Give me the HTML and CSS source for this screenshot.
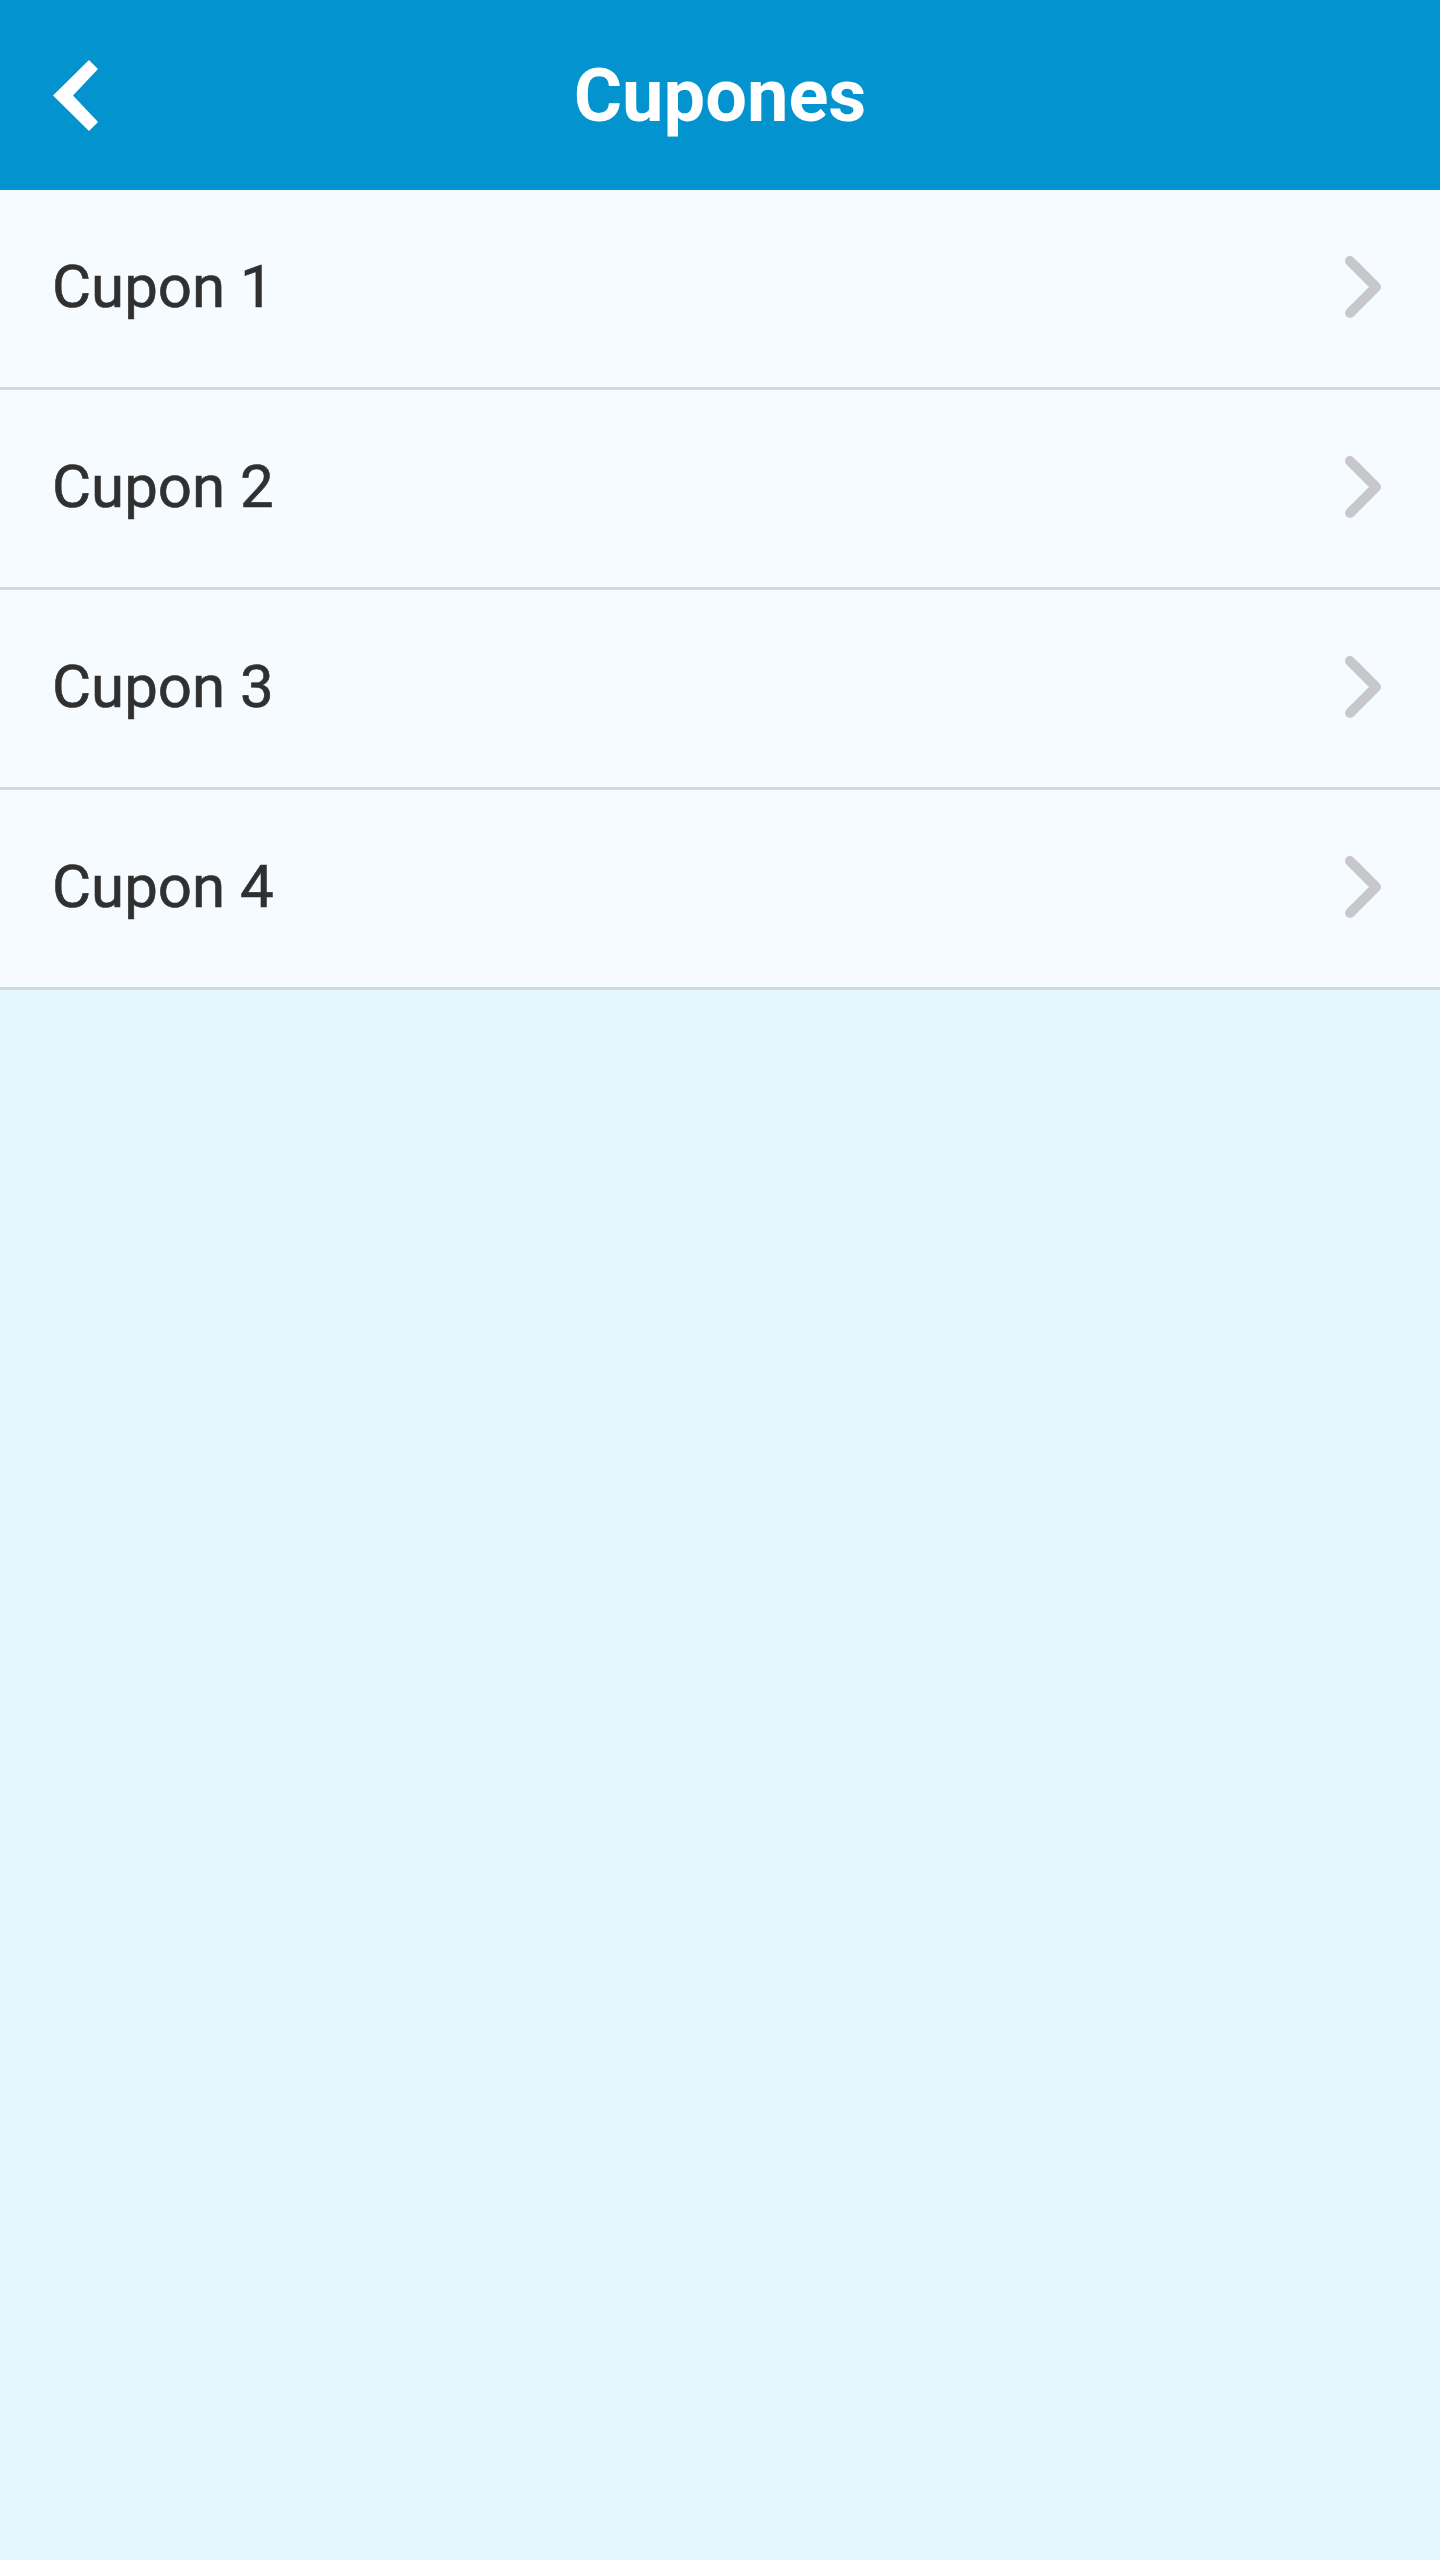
FILE: index.html
```html
<!DOCTYPE html>
<html lang="es">
<head>
<meta charset="utf-8">
<title>Cupones</title>
<link rel="stylesheet" href="styles.css">
</head>
<body>
<header class="topbar">
  <button class="back" aria-label="Volver">
    <svg width="50" height="76" viewBox="50 58 50 76"><polygon points="89,60 98,69 73,95.5 98,122 89,131 53,95.5" fill="#fff"/></svg>
  </button>
  <h1 class="title">Cupones</h1>
</header>
<ul class="list">
  <li class="item"><span class="label">Cupon 1</span><svg class="chev" width="40" height="66" viewBox="0 0 40 66"><polyline points="7,7 33,33 7,59" fill="none" stroke="#c8c8cc" stroke-width="10" stroke-linecap="round" stroke-linejoin="round"/></svg></li>
  <li class="item"><span class="label">Cupon 2</span><svg class="chev" width="40" height="66" viewBox="0 0 40 66"><polyline points="7,7 33,33 7,59" fill="none" stroke="#c8c8cc" stroke-width="10" stroke-linecap="round" stroke-linejoin="round"/></svg></li>
  <li class="item"><span class="label">Cupon 3</span><svg class="chev" width="40" height="66" viewBox="0 0 40 66"><polyline points="7,7 33,33 7,59" fill="none" stroke="#c8c8cc" stroke-width="10" stroke-linecap="round" stroke-linejoin="round"/></svg></li>
  <li class="item"><span class="label">Cupon 4</span><svg class="chev" width="40" height="66" viewBox="0 0 40 66"><polyline points="7,7 33,33 7,59" fill="none" stroke="#c8c8cc" stroke-width="10" stroke-linecap="round" stroke-linejoin="round"/></svg></li>
</ul>
</body>
</html>
```

FILE: styles.css
```css
html, body {
  margin: 0;
  padding: 0;
}
body {
  background: #e3f5fd;
  font-family: Roboto, "Liberation Sans", sans-serif;
  min-height: 2560px;
}
.topbar {
  height: 190px;
  background: #0393cf;
  display: flex;
  align-items: center;
  justify-content: center;
  position: relative;
}
.back {
  position: absolute;
  left: 50px;
  top: 58px;
  padding: 0;
  margin: 0;
  border: 0;
  background: none;
  display: block;
  line-height: 0;
}
.title {
  margin: 0;
  color: #fff;
  font-size: 74px;
  font-weight: 700;
  line-height: 1;
  padding-top: 2px;
}
.list {
  list-style: none;
  margin: 0;
  padding: 0;
}
.item {
  height: 193px;
  border-bottom: 3px solid #d4d8da;
  background: #f5fbff;
  display: flex;
  align-items: center;
  justify-content: space-between;
  padding: 0 57px 4px 52px;
}
.label {
  color: #303030;
  font-size: 60px;
  font-weight: 400;
  -webkit-text-stroke: 0.6px #303030;
}
.chev {
  display: block;
}
```
